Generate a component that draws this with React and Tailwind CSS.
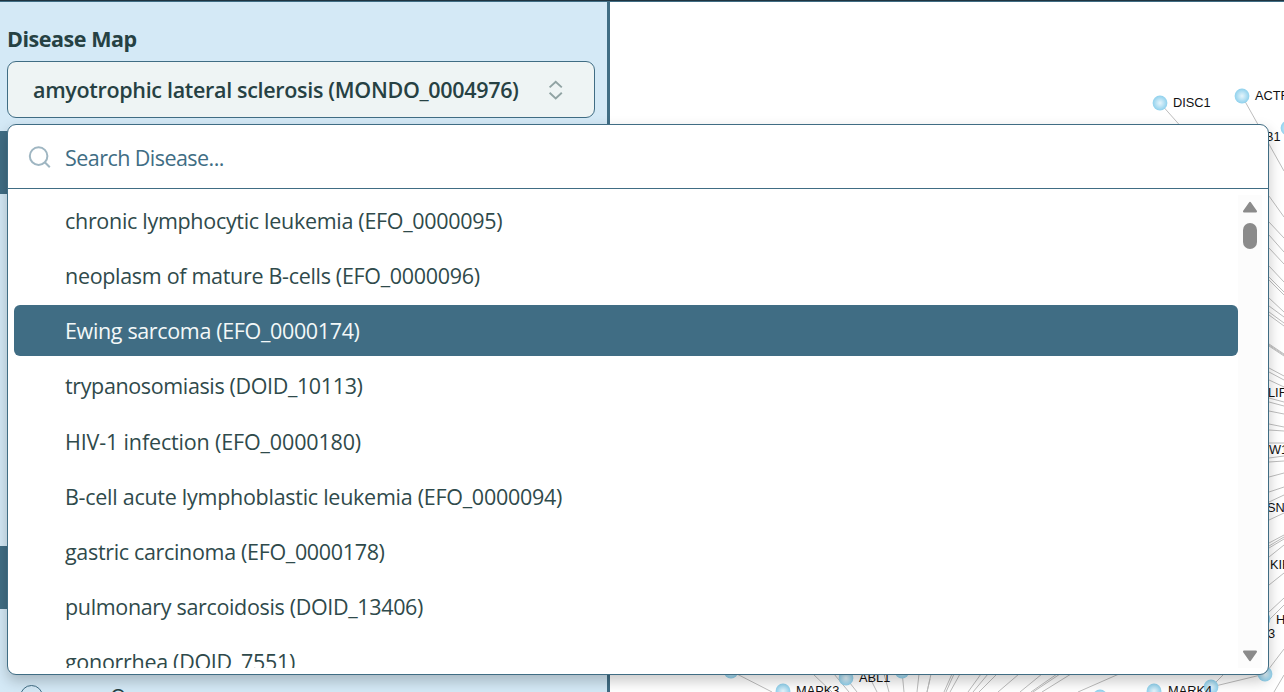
import React from "react";

const diseases = [
  { name: "chronic lymphocytic leukemia (EFO_0000095)", fit: "tracking-[-0.3px] pt-[2px]" },
  { name: "neoplasm of mature B-cells (EFO_0000096)", fit: "tracking-[-0.31px]" },
  { name: "Ewing sarcoma (EFO_0000174)", fit: "tracking-[-0.35px]", active: true },
  { name: "trypanosomiasis (DOID_10113)", fit: "tracking-[-0.37px]" },
  { name: "HIV-1 infection (EFO_0000180)", fit: "tracking-[-0.15px] pt-[2px]" },
  { name: "B-cell acute lymphoblastic leukemia (EFO_0000094)", fit: "tracking-[-0.27px] pt-[2px]" },
  { name: "gastric carcinoma (EFO_0000178)", fit: "tracking-[-0.33px]" },
  { name: "pulmonary sarcoidosis (DOID_13406)", fit: "tracking-[-0.34px]" },
  { name: "gonorrhea (DOID_7551)", fit: "tracking-[-0.3px]" },
];

// Each edge is [x1, y1, x2, y2].
const edges = [
  [1160, 103, 1200, 148], [1242, 96, 1284, 171], [1269, 196, 1284, 217],
  [1269, 222, 1284, 238], [1269, 235, 1284, 252], [1269, 248, 1284, 264],
  [1269, 266, 1284, 282], [1269, 277, 1284, 292], [1269, 280, 1284, 295],
  [1269, 298, 1284, 312], [1269, 306, 1284, 317], [1269, 312, 1284, 323],
  [1269, 315, 1284, 326], [1269, 344, 1284, 354], [1269, 345, 1284, 355], [1269, 346, 1284, 356],
  [1269, 368, 1284, 376], [1269, 372, 1284, 380], [1269, 380, 1284, 387],
  [1269, 398, 1284, 402], [1269, 402, 1284, 406], [1269, 411, 1284, 414],
  [1269, 424, 1284, 427], [1269, 430, 1284, 431], [1269, 443, 1284, 443],
  [1269, 458, 1284, 456], [1269, 462, 1284, 461], [1269, 477, 1284, 473],
  [1269, 492, 1284, 487], [1269, 502, 1284, 495], [1269, 520, 1284, 513],
  [1269, 543, 1284, 535], [1269, 546, 1284, 537], [1269, 548, 1284, 539],
  [1269, 557, 1284, 545], [1269, 585, 1284, 573], [1269, 612, 1284, 598],
  [1269, 620, 1284, 605], [1265, 674, 1284, 649], [1274, 692, 1284, 675],
  [1265, 674, 1211, 687], [1211, 687, 1224, 674],
  [731, 671, 772, 692], [813, 674, 832, 692], [834, 674, 849, 692],
  [846, 678, 857, 692], [870, 678, 877, 692], [884, 674, 889, 692],
  [902, 671, 904, 692], [919, 674, 917, 692], [930, 679, 927, 692],
  [931, 674, 927, 692], [952, 674, 944, 692], [954, 674, 946, 692],
  [960, 674, 950, 692], [981, 674, 968, 692], [988, 674, 973, 692],
  [997, 674, 979, 692], [1019, 674, 998, 692], [1042, 674, 1020, 692],
  [1057, 674, 1031, 692], [1060, 674, 1033, 692], [1071, 674, 1042, 692],
  [1119, 674, 1078, 692],
];

const nodes = [
  [1160, 103], [1242, 96], [1288, 128], [1265, 674], [1211, 687], [1154, 691],
  [1100, 697], [731, 671], [783, 691], [846, 678], [902, 671], [1263, 619],
];

const labels = [
  [1173, 107, "DISC1"], [1255, 100, "ACTR2"], [1265, 141, "B1"], [1268, 397, "LIF"],
  [1269, 454, "W1"], [1267, 512, "SNX"], [1270, 569, "KIF"], [1276, 624, "H"],
  [1268, 638, "3"], [796, 695, "MAPK3"], [859, 682, "ABL1"], [1168, 695, "MARK4"],
];

function Network() {
  return (
    <svg className="absolute inset-0" width="1284" height="692" viewBox="0 0 1284 692">
      <defs>
        <radialGradient id="node">
          <stop offset="0" stopColor="#e6f5fc" />
          <stop offset="0.45" stopColor="#c0e5f5" />
          <stop offset="1" stopColor="#8fd1ed" />
        </radialGradient>
      </defs>
      <g stroke="#bdbdbd" strokeWidth="1">
        {edges.map((e, i) => <line key={i} x1={e[0]} y1={e[1]} x2={e[2]} y2={e[3]} />)}
      </g>
      {nodes.map(([x, y], i) => <circle key={i} cx={x} cy={y} r="7.4" fill="url(#node)" />)}
      <g className="font-['Liberation_Sans',Arial,sans-serif] text-[12.8px]" fill="#111">
        {labels.map(([x, y, t], i) => <text key={i} x={x} y={y}>{t}</text>)}
      </g>
    </svg>
  );
}

function Sidebar() {
  return (
    <aside className="flex h-full w-[610px] shrink-0 flex-col border-r-[3px] border-[#406d84] bg-[#d4e9f6]">
      <div className="pl-[7px] pr-3 pt-[21px]">
        <h2 className="h-[38px] text-[21.5px] font-bold leading-[31px] tracking-[-0.45px]">Disease Map</h2>
        <button className="flex h-[57px] w-[588px] items-center justify-between rounded-[9px] border border-[#406d84] bg-[#eef4f4] pl-[25px] pr-[27px]">
          <span className="whitespace-nowrap pt-[2px] text-[21.5px] font-semibold tracking-[-0.32px]">amyotrophic lateral sclerosis (MONDO_0004976)</span>
          <svg width="22" height="22" viewBox="0 0 22 22" fill="none" stroke="#90a3a3" strokeWidth="1.9">
            <path d="M4.6 8.4 10.7 2.7 16.8 8.4M4.6 13.8 10.7 19.5 16.8 13.8" />
          </svg>
        </button>
      </div>
      <div className="mt-[13px] h-[63px] bg-[#406d84]" />
      <div className="mt-[352px] h-[63px] bg-[#406d84]" />
      <div className="mt-[76px] flex h-[7px] items-start gap-[67px] overflow-hidden pl-5">
        <span className="size-[23px] shrink-0 rounded-full border border-[#406d84]" />
        <span className="mt-[1px] text-[21px] font-medium leading-[23px]">O</span>
      </div>
    </aside>
  );
}

function DiseaseMenu() {
  return (
    <div className="absolute left-[7px] top-[124px] flex h-[551px] w-[1262px] flex-col overflow-hidden rounded-[9px] border border-[#406d84] bg-white shadow-[0_6px_14px_rgba(0,0,0,0.22)]">
      <div className="flex h-[64px] shrink-0 items-center border-b border-[#406d84] pl-5">
        <svg width="24" height="24" viewBox="0 0 24 24" fill="none" stroke="#9fb6c2" strokeWidth="2">
          <circle cx="10.6" cy="11.1" r="8.8" />
          <path d="m16.8 17.3 5 5" />
        </svg>
        <span className="ml-[13px] pt-[4px] text-[21.5px] tracking-[-0.55px] text-[#406d84]">Search Disease...</span>
      </div>
      <div className="flex min-h-0 flex-1 p-[6px]">
        <ul className="flex min-w-0 flex-1 flex-col gap-[4.2px] overflow-hidden">
          {diseases.map((d) => (
            <li key={d.name} className={"flex h-[51px] shrink-0 items-center rounded-md pl-[51px] text-[21.5px] " + (d.active ? "bg-[#406d84] text-[#f3f8f8]" : "text-[#2f4a4b]")}>
              <span className={"whitespace-nowrap " + d.fit}>{d.name}</span>
            </li>
          ))}
        </ul>
        <div className="flex w-6 shrink-0 flex-col items-center bg-[#fcfcfc] py-[6px]">
          <svg width="16" height="12" viewBox="0 0 16 12" fill="#8b8b8b" stroke="#8b8b8b" strokeWidth="2" strokeLinejoin="round"><path d="M8 1.8 14 10.4H2z" /></svg>
          <span className="mt-[10px] h-[26px] w-[14px] rounded-full bg-[#8b8b8b]" />
          <svg className="mt-auto" width="16" height="12" viewBox="0 0 16 12" fill="#8b8b8b" stroke="#8b8b8b" strokeWidth="2" strokeLinejoin="round"><path d="M8 10.2 14 1.6H2z" /></svg>
        </div>
      </div>
    </div>
  );
}

export default function App() {
  return (
    <div className="relative flex h-[692px] w-[1284px] flex-col overflow-hidden bg-white font-['Open_Sans','Noto_Sans',sans-serif] text-[#264143]">
      <div className="h-[2px] shrink-0 border-b border-[#406d84] bg-[#1f3440]" />
      <div className="flex min-h-0 flex-1">
        <Sidebar />
        <main className="flex-1"><Network /></main>
      </div>
      <DiseaseMenu />
    </div>
  );
}
